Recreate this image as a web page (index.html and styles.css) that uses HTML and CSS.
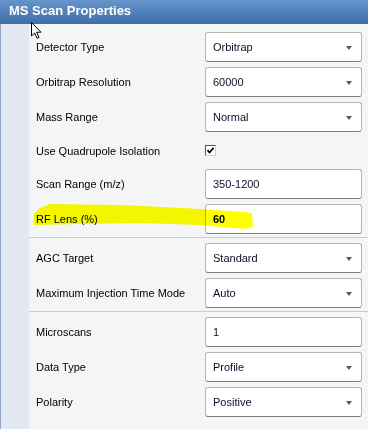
FILE: index.html
```html
<!DOCTYPE html>
<html>
<head>
<meta charset="utf-8">
<link rel="stylesheet" href="styles.css">
</head>
<body>
<div class="panel">
  <div class="header">MS Scan Properties</div>
  <div class="main">
    <div class="strip"></div>
    <div class="content">
      <div class="group first">
        <div class="row"><span class="label">Detector Type</span><div class="combo"><span>Orbitrap</span><i class="arrow"></i></div></div>
        <div class="row"><span class="label">Orbitrap Resolution</span><div class="combo"><span>60000</span><i class="arrow"></i></div></div>
        <div class="row"><span class="label">Mass Range</span><div class="combo"><span>Normal</span><i class="arrow"></i></div></div>
        <div class="row short"><span class="label">Use Quadrupole Isolation</span><div class="checkcell"><span class="checkbox"><svg width="9" height="9" viewBox="0 0 9 9"><path d="M1.5 4.2 L3.5 6.5 L7.6 1.8" fill="none" stroke="#000" stroke-width="1.8"/></svg></span></div></div>
        <div class="row"><span class="label">Scan Range (m/z)</span><div class="combo text"><span>350-1200</span></div></div>
        <div class="row"><span class="label">RF Lens (%)</span><div class="combo text"><span class="bold">60</span></div></div>
      </div>
      <div class="group">
        <div class="row"><span class="label">AGC Target</span><div class="combo"><span>Standard</span><i class="arrow"></i></div></div>
        <div class="row"><span class="label">Maximum Injection Time Mode</span><div class="combo"><span>Auto</span><i class="arrow"></i></div></div>
      </div>
      <div class="group last">
        <div class="row"><span class="label">Microscans</span><div class="combo text"><span>1</span></div></div>
        <div class="row"><span class="label">Data Type</span><div class="combo"><span>Profile</span><i class="arrow"></i></div></div>
        <div class="row"><span class="label">Polarity</span><div class="combo"><span>Positive</span><i class="arrow"></i></div></div>
      </div>
    </div>
  </div>
  <svg class="highlight" width="368" height="429" viewBox="0 0 368 429"><path d="M34 214 L40 208 L50 204 L120 205 L184 208 L230 211 L252 213 L253 227 L244 229 L200 225 L140 223 L80 224 L34 225 Z" fill="#ffff00"/></svg>
  <svg class="cursor" width="14" height="20" viewBox="0 0 14 20"><path d="M1.5 1.5 L1.5 15 L4.6 12 L7 17.3 L9 16.4 L6.7 11.2 L11 11.2 Z" fill="#fff" stroke="#000" stroke-width="1" stroke-linejoin="round"/></svg>
</div>
</body>
</html>
```
FILE: styles.css
```css
html, body {
  margin: 0;
  padding: 0;
}
body {
  width: 368px;
  height: 429px;
  overflow: hidden;
  background: #f4f5f7;
  font-family: "Liberation Sans", Arial, sans-serif;
  font-size: 11px;
  color: #000;
}
.panel {
  position: relative;
  width: 368px;
  height: 429px;
  display: flex;
  flex-direction: column;
}
.header {
  height: 24px;
  box-sizing: border-box;
  padding-left: 9px;
  line-height: 21px;
  font-size: 13px;
  font-weight: bold;
  color: #fff;
  background: linear-gradient(#6595cb, #3e6ea6);
}
.main {
  flex: 1;
  display: flex;
}
.strip {
  width: 28px;
  border-left: 1px solid #8ea3bf;
  background: #e2e8f1;
}
.content {
  flex: 1;
  display: flex;
  flex-direction: column;
  background: #f4f5f7;
}
.group {
  display: flex;
  flex-direction: column;
  gap: 5px;
  padding: 5px 0 3px 0;
  border-bottom: 1px solid #c9cdd3;
}
.group.first {
  padding-top: 8px;
}
.group.last {
  border-bottom: none;
  padding-top: 5px;
}
.row {
  height: 30px;
  display: flex;
  align-items: center;
  padding-left: 7px;
  padding-right: 6px;
}
.row.short {
  height: 27px;
}
.label {
  width: 169px;
  flex: none;
  white-space: nowrap;
}
.combo {
  position: relative;
  width: 157px;
  height: 30px;
  box-sizing: border-box;
  border: 1px solid #b4b4b4;
  border-bottom-color: #7e7e7e;
  border-radius: 3px;
  background: #fff;
  display: flex;
  align-items: center;
  padding-left: 7px;
  color: #0c0c2a;
}
.bold {
  font-weight: bold;
  color: #000;
}
.arrow {
  position: absolute;
  right: 9px;
  top: 13px;
  width: 0;
  height: 0;
  border-left: 3.5px solid transparent;
  border-right: 3.5px solid transparent;
  border-top: 4px solid #5a5a5a;
}
.checkcell {
  width: 157px;
  display: flex;
  align-items: center;
}
.checkbox {
  width: 11px;
  height: 11px;
  box-sizing: border-box;
  border: 1px solid #555;
  border-right-color: #d4d0c8;
  border-bottom-color: #d4d0c8;
  background: #fff;
  display: flex;
  align-items: center;
  justify-content: center;
}
.checkbox svg {
  display: block;
}
.highlight {
  position: absolute;
  left: 0;
  top: 0;
  mix-blend-mode: multiply;
  pointer-events: none;
}
.cursor {
  position: absolute;
  left: 30px;
  top: 21px;
}
```
